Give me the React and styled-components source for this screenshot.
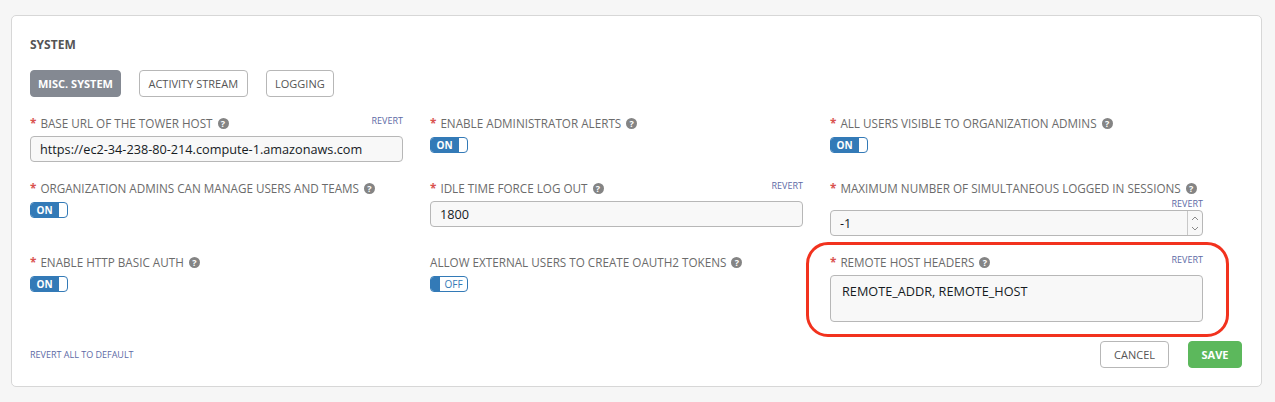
import React from 'react'
import styled, {createGlobalStyle} from 'styled-components'

const GlobalStyle = createGlobalStyle`
  html, body {
    margin: 0;
    padding: 0;
    background: #f6f6f6;
    font-family: "Open Sans", "Liberation Sans", sans-serif;
  }
`;

const Page = styled.div`
    padding: 15px 13px 15px 11px;
`;

const Panel = styled.div`
    position: relative;
    background: #ffffff;
    border: 1px solid #d7d7d7;
    border-radius: 5px;
    padding: 20px 19px 18px 18px;
`;

const Title = styled.div`
    font-size: 12px;
    line-height: 17px;
    font-weight: 700;
    color: #555555;
`;

const Tabs = styled.div`
    display: flex;
    gap: 18px;
    margin-top: 17px;
`;

const Tab = styled.div`
    height: 27px;
    box-sizing: border-box;
    padding: 0 ${p => p.active ? '7px' : '8.5px'};
    display: flex;
    align-items: center;
    border-radius: 4px;
    font-size: 11px;
    font-weight: ${p => p.active ? 700 : 400};
    color: ${p => p.active ? '#ffffff' : '#555555'};
    background: ${p => p.active ? '#848992' : '#ffffff'};
    border: 1px solid ${p => p.active ? '#848992' : '#b7b7b7'};
`;

const Grid = styled.div`
    display: grid;
    grid-template-columns: repeat(3, 373px);
    column-gap: 27px;
    row-gap: 18px;
    margin-top: 18px;
`;

const Field = styled.div`
    display: flex;
    flex-direction: column;
`;

const LabelRow = styled.div`
    display: flex;
    flex-wrap: ${p => p.stacked ? 'wrap' : 'nowrap'};
    justify-content: space-between;
    align-items: flex-start;
`;

const Label = styled.div`
    font-size: 11.7px;
    line-height: 17px;
    color: #6b6b6b;
    white-space: nowrap;
    display: flex;
    align-items: center;
`;

const Required = styled.span`
    color: #d9534f;
    font-weight: 700;
    margin-right: 4px;
`;

const Help = styled.span`
    display: inline-flex;
    align-items: center;
    justify-content: center;
    width: 11px;
    height: 11px;
    border-radius: 50%;
    background: #848484;
    color: #ffffff;
    font-size: 9px;
    font-weight: 700;
    line-height: 1;
    margin-left: 5px;
`;

const Revert = styled.div`
    font-size: 9px;
    line-height: 12px;
    color: #5d6aa6;
    margin-left: auto;
    ${p => p.stacked ? 'width: 100%; text-align: right; margin-top: 1px;' : 'margin-top: 0px;'}
`;

const Input = styled.div`
    margin-top: ${p => p.stacked ? '0px' : '4px'};
    height: ${p => p.tall ? '47px' : '26px'};
    box-sizing: border-box;
    border: 1px solid #b7b7b7;
    border-radius: 4px;
    background: #f8f8f8;
    font-size: 12.7px;
    color: #161b1f;
    display: flex;
    align-items: ${p => p.tall ? 'flex-start' : 'center'};
    padding: ${p => p.tall ? '6px 0 0 11px' : '0 0 0 9px'};
`;

const InputText = styled.span`
    flex: 1;
`;

const Spinner = styled.div`
    width: 14px;
    align-self: stretch;
    border-left: 1px solid #c8c8c8;
    display: flex;
    flex-direction: column;
    justify-content: space-around;
    align-items: center;
    padding: 2px 0;
`;

const Toggle = styled.div`
    margin-top: 5px;
    width: 38px;
    height: 16px;
    box-sizing: border-box;
    border: 1px solid #337ab7;
    border-radius: 4px;
    display: flex;
    overflow: hidden;
    background: #ffffff;
`;

const ToggleOn = styled.div`
    width: ${p => p.on ? '27px' : '8px'};
    background: #337ab7;
    color: #ffffff;
    font-size: 10px;
    font-weight: 700;
    display: flex;
    align-items: center;
    justify-content: center;
    border-right: 1px solid #337ab7;
`;

const ToggleOff = styled.div`
    flex: 1;
    color: #337ab7;
    font-size: 10px;
    display: flex;
    align-items: center;
    justify-content: center;
`;

const Footer = styled.div`
    display: flex;
    justify-content: space-between;
    align-items: center;
    margin-top: 19px;
`;

const RevertAll = styled.div`
    font-size: 9px;
    color: #5d6aa6;
`;

const Buttons = styled.div`
    display: flex;
    gap: 19px;
`;

const Button = styled.div`
    height: 27px;
    box-sizing: border-box;
    padding: 0 ${p => p.primary ? '12.5px' : '13px'};
    display: flex;
    align-items: center;
    border-radius: 4px;
    font-size: 11px;
    font-weight: ${p => p.primary ? 700 : 400};
    color: ${p => p.primary ? '#ffffff' : '#555555'};
    background: ${p => p.primary ? '#5cb85c' : '#ffffff'};
    border: 1px solid ${p => p.primary ? '#5cb85c' : '#b7b7b7'};
`;

const Highlight = styled.div`
    position: absolute;
    left: 794px;
    top: 226px;
    width: 423px;
    height: 95px;
    box-sizing: border-box;
    border: 3px solid #f2321e;
    border-radius: 22px;
    pointer-events: none;
`;

const Chevron = ({up}) => (
    <svg width="8" height="5" viewBox="0 0 8 5">
        <path d={up ? 'M1 4 L4 1 L7 4' : 'M1 1 L4 4 L7 1'} fill="none" stroke="#8a8a8a" strokeWidth="1" />
    </svg>
);

const FieldLabel = ({text, required, revert, stacked}) => (
    <LabelRow stacked={stacked}>
        <Label>
            {required && <Required>*</Required>}
            {text}
            <Help>?</Help>
        </Label>
        {revert && <Revert stacked={stacked}>REVERT</Revert>}
    </LabelRow>
);

const ToggleSwitch = ({on}) => (
    <Toggle>
        <ToggleOn on={on}>{on ? 'ON' : ''}</ToggleOn>
        <ToggleOff>{on ? '' : 'OFF'}</ToggleOff>
    </Toggle>
);

const fields = [
    {text: 'BASE URL OF THE TOWER HOST', required: true, revert: true, value: 'https://ec2-34-238-80-214.compute-1.amazonaws.com'},
    {text: 'ENABLE ADMINISTRATOR ALERTS', required: true, toggle: true, on: true},
    {text: 'ALL USERS VISIBLE TO ORGANIZATION ADMINS', required: true, toggle: true, on: true},
    {text: 'ORGANIZATION ADMINS CAN MANAGE USERS AND TEAMS', required: true, toggle: true, on: true},
    {text: 'IDLE TIME FORCE LOG OUT', required: true, revert: true, value: '1800'},
    {text: 'MAXIMUM NUMBER OF SIMULTANEOUS LOGGED IN SESSIONS', required: true, revert: true, stacked: true, value: '-1', number: true},
    {text: 'ENABLE HTTP BASIC AUTH', required: true, toggle: true, on: true},
    {text: 'ALLOW EXTERNAL USERS TO CREATE OAUTH2 TOKENS', required: false, toggle: true, on: false},
    {text: 'REMOTE HOST HEADERS', required: true, revert: true, value: 'REMOTE_ADDR, REMOTE_HOST', tall: true},
];

export default function App() {
    return (
        <Page>
            <GlobalStyle />
            <Panel>
                <Title>SYSTEM</Title>
                <Tabs>
                    <Tab active>MISC. SYSTEM</Tab>
                    <Tab>ACTIVITY STREAM</Tab>
                    <Tab>LOGGING</Tab>
                </Tabs>
                <Grid>
                    {fields.map((f, key) =>
                        <Field key={key}>
                            <FieldLabel text={f.text} required={f.required} revert={f.revert} stacked={f.stacked} />
                            {f.toggle
                                ? <ToggleSwitch on={f.on} />
                                : <Input tall={f.tall} stacked={f.stacked}>
                                    <InputText>{f.value}</InputText>
                                    {f.number &&
                                        <Spinner>
                                            <Chevron up />
                                            <Chevron />
                                        </Spinner>
                                    }
                                  </Input>
                            }
                        </Field>
                    )}
                </Grid>
                <Footer>
                    <RevertAll>REVERT ALL TO DEFAULT</RevertAll>
                    <Buttons>
                        <Button>CANCEL</Button>
                        <Button primary>SAVE</Button>
                    </Buttons>
                </Footer>
                <Highlight />
            </Panel>
        </Page>
    )
}
